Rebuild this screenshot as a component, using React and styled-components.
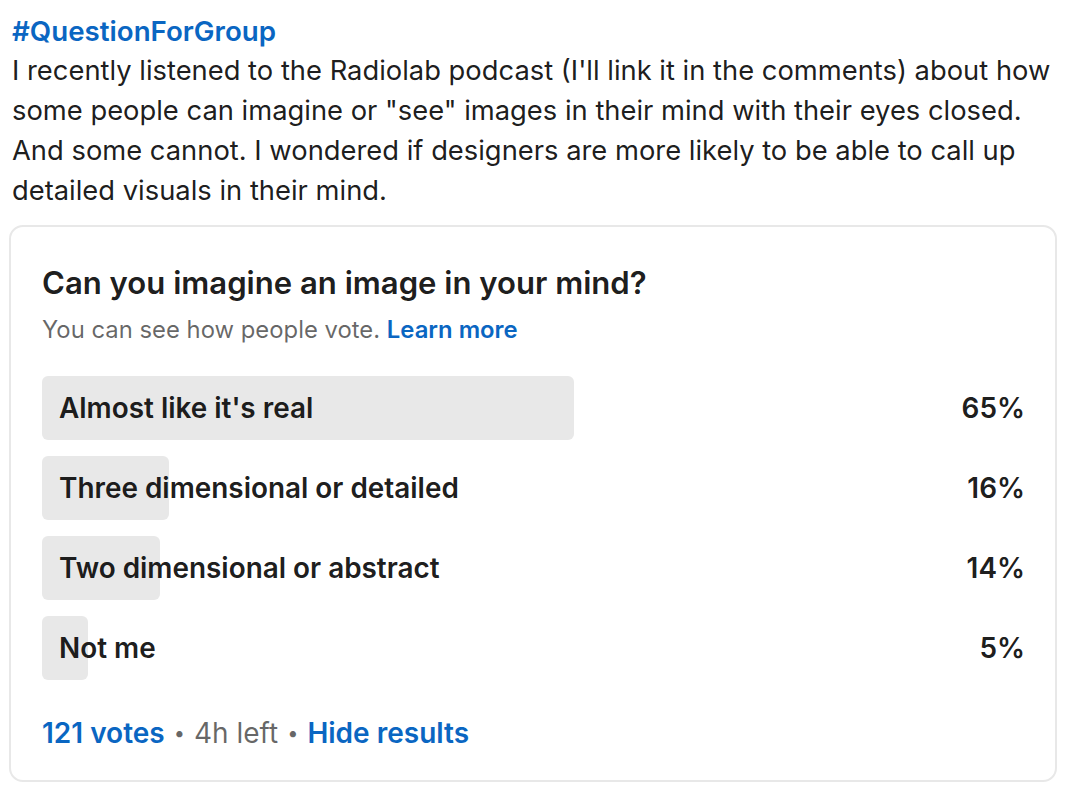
import React from "react";
import styled, { createGlobalStyle } from "styled-components";

const Global = createGlobalStyle`
  html, body { margin: 0; padding: 0; background: #fff; }
  body { font-family: Inter, "Noto Sans", "Liberation Sans", sans-serif; color: rgba(0,0,0,0.9); }
  * { box-sizing: border-box; }
`;

const Post = styled.div`
  width: 1068px;
  padding: 11px 11px 0 9px;
`;

const Hashtag = styled.a`
  display: block;
  margin-left: 3px;
  font-size: 27.7px;
  line-height: 40px;
  font-weight: 600;
  color: #0a66c2;
  text-decoration: none;
`;

const Body = styled.p`
  margin: 0 0 0 3px;
  font-size: 27.35px;
  line-height: 40px;
  font-weight: 400;
  color: rgba(0,0,0,0.9);
  white-space: nowrap;
`;

const Card = styled.div`
  margin-top: 14px;
  border: 2px solid #e8e8e8;
  border-radius: 14px;
  padding: 38px 30px 31px 31px;
`;

const Question = styled.h2`
  margin: 0;
  font-size: 31.1px;
  line-height: 36px;
  font-weight: 600;
  color: rgba(0,0,0,0.9);
`;

const Sub = styled.div`
  margin-top: 15px;
  font-size: 23.85px;
  line-height: 28px;
  color: rgba(0,0,0,0.6);
`;

const Link = styled.a`
  color: #0a66c2;
  font-weight: 600;
  text-decoration: none;
`;

const Options = styled.div`
  margin-top: 32px;
  display: flex;
  flex-direction: column;
  gap: 16px;
`;

const Row = styled.div`
  display: grid;
  grid-template-columns: 818px 1fr;
  align-items: center;
  height: 64px;
`;

const Track = styled.div`
  position: relative;
  height: 64px;
  display: flex;
  align-items: center;
`;

const Fill = styled.div`
  position: absolute;
  left: 0;
  top: 0;
  bottom: 0;
  background: #e8e8e8;
  border-radius: 6px;
`;

const Label = styled.span`
  position: relative;
  padding-left: 17px;
  font-size: 27.9px;
  font-weight: 600;
  color: rgba(0,0,0,0.9);
`;

const Pct = styled.span`
  text-align: right;
  font-size: 27.9px;
  font-weight: 600;
  color: rgba(0,0,0,0.9);
`;

const Footer = styled.div`
  margin-top: 37px;
  font-size: 28px;
  line-height: 32px;
  color: rgba(0,0,0,0.6);
  display: flex;
  align-items: center;
`;

const Dot = styled.span`
  margin: 0 9px;
  font-size: 20px;
`;

const options = [
  { label: "Almost like it's real", pct: 65, w: 532 },
  { label: "Three dimensional or detailed", pct: 16, w: 127 },
  { label: "Two dimensional or abstract", pct: 14, w: 118 },
  { label: "Not me", pct: 5, w: 46 },
];

export default function App() {
  return (
    <>
      <Global />
      <Post>
        <Hashtag href="#">#QuestionForGroup</Hashtag>
        <Body>
          I recently listened to the Radiolab podcast (I'll link it in the comments) about how
          <br />some people can imagine or "see" images in their mind with their eyes closed.
          <br />And some cannot. I wondered if designers are more likely to be able to call up
          <br />detailed visuals in their mind.
        </Body>
        <Card>
          <Question>Can you imagine an image in your mind?</Question>
          <Sub>
            You can see how people vote. <Link href="#">Learn more</Link>
          </Sub>
          <Options>
            {options.map((o) => (
              <Row key={o.label}>
                <Track>
                  <Fill style={{ width: o.w }} />
                  <Label>{o.label}</Label>
                </Track>
                <Pct>{o.pct}%</Pct>
              </Row>
            ))}
          </Options>
          <Footer>
            <Link href="#">121 votes</Link>
            <Dot>•</Dot>
            <span>4h left</span>
            <Dot>•</Dot>
            <Link href="#">Hide results</Link>
          </Footer>
        </Card>
      </Post>
    </>
  );
}
